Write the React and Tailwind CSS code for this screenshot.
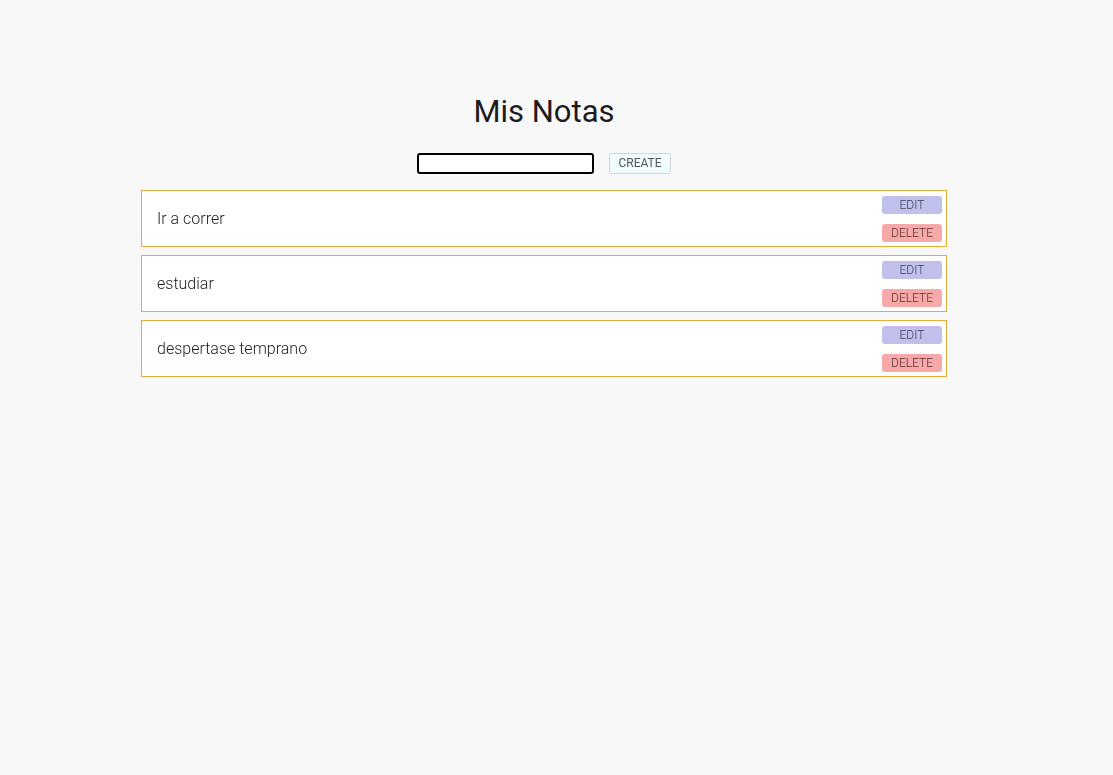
import React, { useState } from 'react';

const App = () => {
    const [text, setText] = useState('');
    const notes = ['Ir a correr', 'estudiar', 'despertase temprano'];

    return (
        <div className="min-h-[775px] w-full bg-[#f8f8f8] font-['Roboto',sans-serif] text-[#222]">
            <div className="flex flex-col items-center pt-[93px] pr-[25px]">
                <h1 className="text-[31px] leading-[38px] font-normal text-[#1c1c1c]">Mis Notas</h1>

                {/* create row */}
                <div className="mt-[22px] flex items-center gap-[15px]">
                    <input
                        value={text}
                        onChange={(e) => setText(e.target.value)}
                        autoFocus
                        className="h-[21px] w-[177px] rounded-[3px] border-2 border-black bg-white px-1 text-[13px] outline-none"
                    />
                    <button className="h-[21px] w-[62px] rounded-[2px] border border-[#cfd6d8] bg-[#f0fcfe] text-[12px] leading-[19px] text-[#555]">
                        CREATE
                    </button>
                </div>

                {/* notes list */}
                <div className="mt-[16px] flex w-[806px] flex-col gap-2">
                    {notes.map((n) => (
                        <div key={n} className="flex h-[57px] items-center justify-between border border-[#e4ad3a] bg-white pl-[15px] pr-1">
                            <span className="text-[16px] font-light text-[#222]">{n}</span>
                            <div className="flex flex-col gap-[10px]">
                                <button className="h-[18px] w-[60px] rounded-[3px] bg-[#c1c0ec] text-[12px] leading-[18px] font-light text-[#3c3c50]">
                                    EDIT
                                </button>
                                <button className="h-[18px] w-[60px] rounded-[3px] bg-[#f7a8a8] text-[12px] leading-[18px] font-light text-[#5a2e2e]">
                                    DELETE
                                </button>
                            </div>
                        </div>
                    ))}
                </div>
            </div>
        </div>
    );
};

export default App;
